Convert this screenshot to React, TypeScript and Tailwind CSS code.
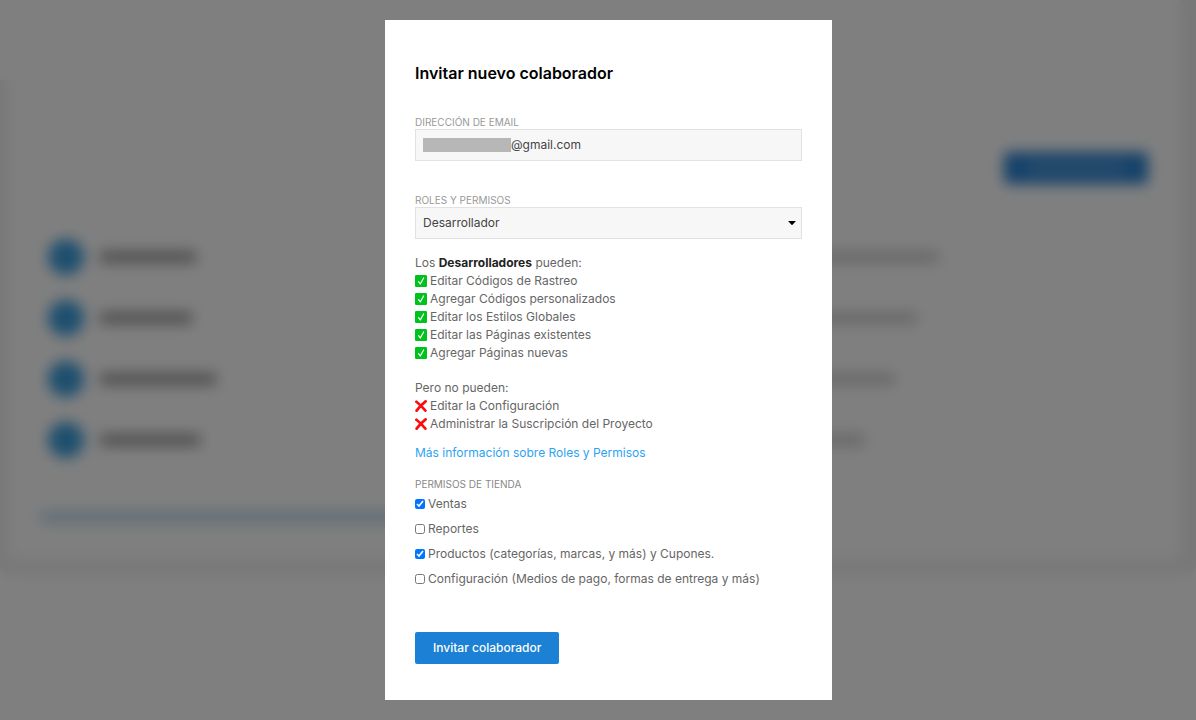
import { useState } from "react";

const ALLOWED = [
  "Editar Códigos de Rastreo",
  "Agregar Códigos personalizados",
  "Editar los Estilos Globales",
  "Editar las Páginas existentes",
  "Agregar Páginas nuevas",
];

const DENIED = ["Editar la Configuración", "Administrar la Suscripción del Proyecto"];

const STORE_PERMISSIONS = [
  { id: "ventas", label: "Ventas", on: true },
  { id: "reportes", label: "Reportes", on: false },
  { id: "productos", label: "Productos (categorías, marcas, y más) y Cupones.", on: true },
  { id: "config", label: "Configuración (Medios de pago, formas de entrega y más)", on: false },
];

// widths of the name and email placeholders in the collaborator list
const MEMBERS = [
  { name: 96, email: 176 },
  { name: 92, email: 154 },
  { name: 116, email: 132 },
  { name: 100, email: 102 },
];

function CheckIcon() {
  return (
    <svg viewBox="0 0 12 12" className="size-3 shrink-0" aria-hidden="true">
      <rect width="12" height="12" rx="1.2" fill="#00c21c" />
      <path d="M3.6 6.6 L5.3 9 L8.6 3" fill="none" stroke="#fff" strokeWidth="1.2" strokeLinecap="round" strokeLinejoin="round" />
    </svg>
  );
}

function CrossIcon() {
  return (
    <svg viewBox="0 0 12 12" className="size-3 shrink-0" aria-hidden="true">
      <path d="M1.4 1.8 Q5 4.6 10.4 10.6 M10.6 1.4 Q5.6 5.4 1.6 10.6" fill="none" stroke="#fb0d0d" strokeWidth="2.7" strokeLinecap="round" />
    </svg>
  );
}

function CollaboratorsPage() {
  return (
    <div aria-hidden="true">
      <div className="h-20 border-r-16 border-[#f0f0f0]" />
      <div className="rounded-b-xl border-r-16 border-b-16 border-l-8 border-[#f0f0f0] pr-8 pb-9 pl-8">
        <div className="flex justify-end pt-[72px] pb-[43px]">
          <div className="flex h-8 w-36 items-center justify-center rounded-sm bg-[#2b84d3]">
            <div className="h-2 w-24 bg-[#63a3da]" />
          </div>
        </div>
        {MEMBERS.map((m) => (
          <div key={m.name} className="grid h-[61px] grid-cols-[1fr_385px] items-center border-b border-[#fafafa] pl-2">
            <div className="flex items-center gap-4">
              <div className="size-9 rounded-full bg-[#3d9fdd]" />
              <div className="h-3 bg-[#a0a0a0]" style={{ width: m.name }} />
            </div>
            <div className="h-3 bg-[#d2d2d2]" style={{ width: m.email }} />
          </div>
        ))}
        <div className="mt-10 h-3 w-1/2 bg-[#c4dded]" />
      </div>
    </div>
  );
}

export default function App() {
  const [email, setEmail] = useState("@gmail.com");
  const [role, setRole] = useState("Desarrollador");
  const [permissions, setPermissions] = useState(STORE_PERMISSIONS);

  const toggle = (id: string) =>
    setPermissions((list) => list.map((p) => (p.id === id ? { ...p, on: !p.on } : p)));

  return (
    <div className="min-h-screen bg-white font-['Inter',sans-serif] text-xs leading-[18px] text-[#666]">
      <CollaboratorsPage />

      <div className="fixed inset-0 flex items-center justify-center overflow-auto bg-black/50 pl-[21px] backdrop-blur-[7px]">
        <form
          role="dialog"
          aria-labelledby="invite-title"
          onSubmit={(e) => e.preventDefault()}
          className="w-full max-w-[447px] bg-white px-[30px] pt-[41px] pb-9"
        >
          <h1 id="invite-title" className="text-base leading-6 font-semibold text-black">
            Invitar nuevo colaborador
          </h1>

          <div className="mt-[30px]">
            <label htmlFor="email" className="block text-[10px] leading-[14px] text-[#999]">
              DIRECCIÓN DE EMAIL
            </label>
            <div className="relative">
              <input
                id="email"
                value={email}
                onChange={(e) => setEmail(e.target.value)}
                className="block h-8 w-full border border-[#e2e2e2] bg-[#f7f7f7] pr-2 pb-px pl-[95px] text-[#444]"
              />
              <span className="absolute top-[9px] left-2 h-[14px] w-[88px] bg-[#b7b7b7]" />
            </div>
          </div>

          <div className="mt-8">
            <label htmlFor="role" className="block text-[10px] leading-[14px] text-[#999]">
              ROLES Y PERMISOS
            </label>
            <div className="relative">
              <select
                id="role"
                value={role}
                onChange={(e) => setRole(e.target.value)}
                className="block h-8 w-full appearance-none border border-[#e2e2e2] bg-[#f7f7f7] px-[7px] text-[#444]"
              >
                <option>Desarrollador</option>
              </select>
              <svg viewBox="0 0 8 4" className="pointer-events-none absolute top-[14px] right-[6px] h-1 w-2" aria-hidden="true">
                <path d="M0.6 0 H7.4 Q8 0 7.5 0.6 L4.5 3.7 Q4 4.2 3.5 3.7 L0.5 0.6 Q0 0 0.6 0" fill="#000" />
              </svg>
            </div>
          </div>

          <p className="mt-[15px]">
            Los <strong className="font-bold text-[#222]">Desarrolladores</strong> pueden:
          </p>
          <ul>
            {ALLOWED.map((item) => (
              <li key={item} className="flex items-center gap-[3px]">
                <CheckIcon />
                {item}
              </li>
            ))}
          </ul>

          <p className="mt-[17px]">Pero no pueden:</p>
          <ul>
            {DENIED.map((item) => (
              <li key={item} className="flex items-center gap-[3px]">
                <CrossIcon />
                {item}
              </li>
            ))}
          </ul>

          <a href="#roles" className="mt-[11px] block w-fit text-[#2ea3f2]">
            Más información sobre Roles y Permisos
          </a>

          <fieldset className="mt-[15px]">
            <legend className="text-[10px] leading-[14px] text-[#888]">PERMISOS DE TIENDA</legend>
            <div className="mt-1 flex flex-col gap-[7px]">
              {permissions.map((p) => (
                <label key={p.id} className="flex items-center gap-[3px]">
                  <input type="checkbox" checked={p.on} onChange={() => toggle(p.id)} className="size-[10px] shrink-0" />
                  {p.label}
                </label>
              ))}
            </div>
          </fieldset>

          <button type="submit" className="mt-11 block h-8 rounded-xs bg-[#1c80d4] px-[18px] font-medium text-white">
            Invitar colaborador
          </button>
        </form>
      </div>
    </div>
  );
}
